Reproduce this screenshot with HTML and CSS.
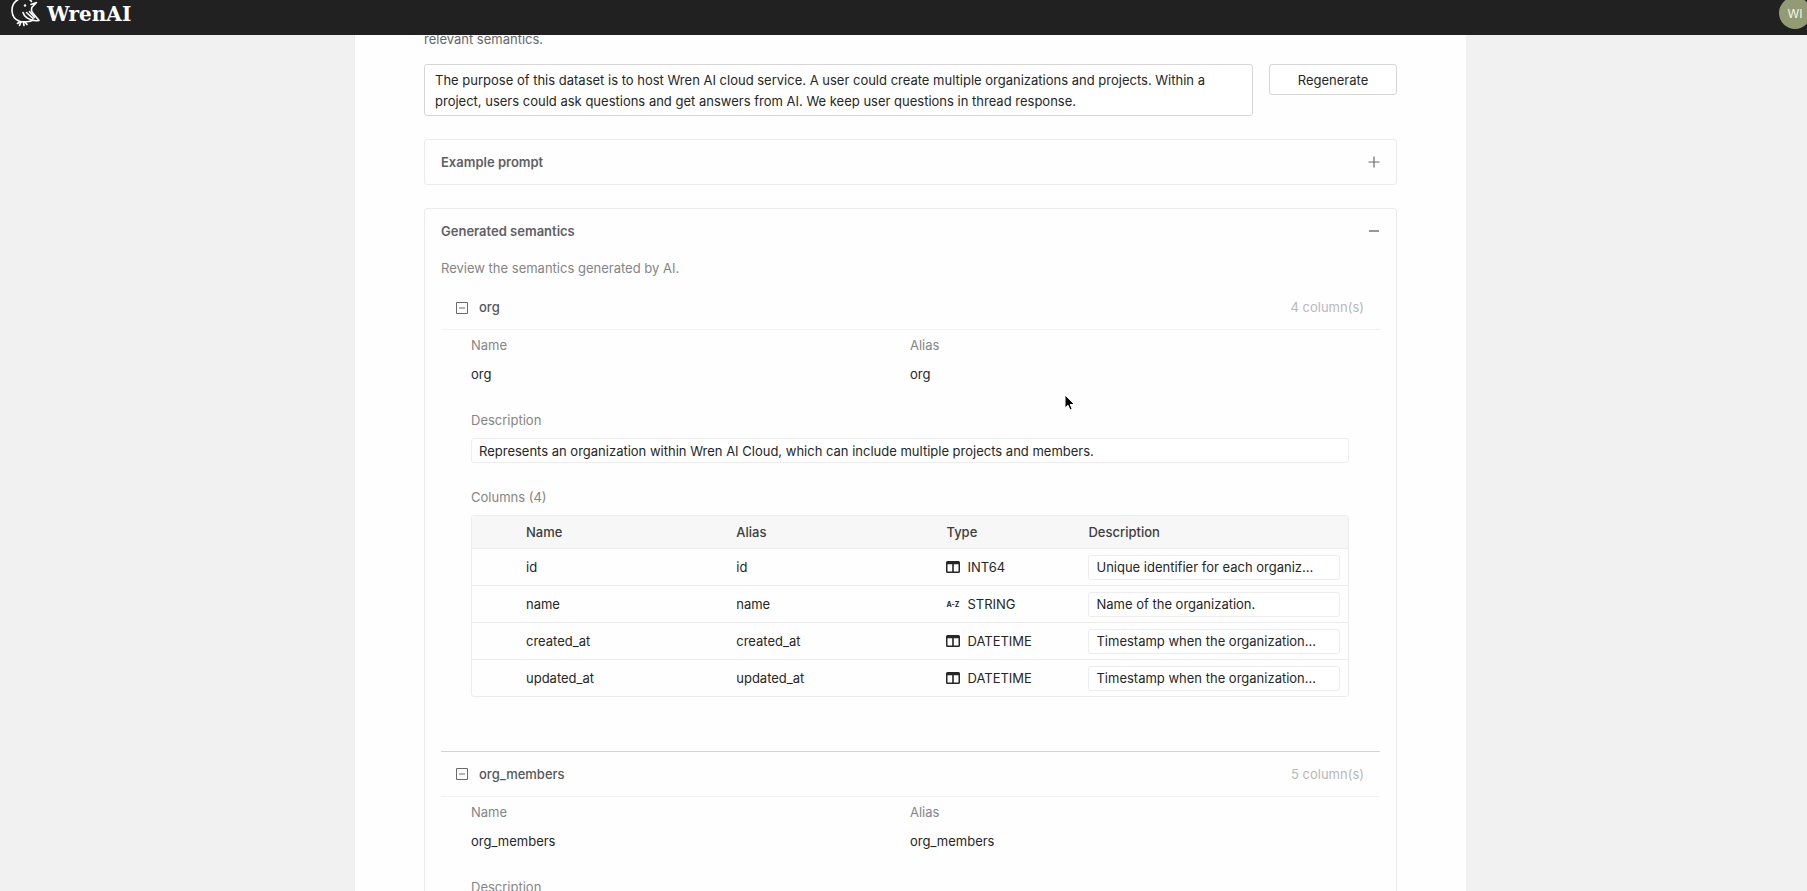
FILE: index.html
```html
<!DOCTYPE html>
<html lang="en">
<head>
<meta charset="utf-8">
<title>WrenAI</title>
<link rel="stylesheet" href="styles.css">
</head>
<body>
<svg class="defs" aria-hidden="true">
  <symbol id="i-cols" viewBox="0 0 14 12"><path fill="currentColor" fill-rule="evenodd" d="M1.500 0h11A1.500 1.500 0 0 1 14 1.500v9a1.500 1.500 0 0 1-1.500 1.500h-11A1.500 1.500 0 0 1 0 10.500v-9A1.500 1.500 0 0 1 1.500 0zM1.500 3.200v7.300h4.700V3.200zM7.800 3.200v7.300h4.700V3.200z"/></symbol>
  <symbol id="i-minus-square" viewBox="0 0 12 12"><path fill="none" stroke="currentColor" d="M.5 .5h11v11H.5zM3 6h6"/></symbol>
</svg>
<header class="header">
  <a class="brand" href="#">
    <svg class="bird" viewBox="0 0 30 28" fill="none" stroke="#fff" stroke-width="1.600" stroke-linecap="round" stroke-linejoin="round" aria-hidden="true">
      <path d="M8 0C3 2.500 .8 7 1 12c.3 5 3 8.500 7 10l2 .700h6c2.500 0 4.500-.4 6-1.500"/>
      <path d="M8 0c4-1.500 10-1.500 12.500 2.500"/>
      <path d="M20 5.500 25.500 3.500 20.800 8.500c-.5 1.500-.4 3 .2 4.500L28 21.500c-3.500.5-8.500-.2-12-2.700-2.200-1.600-3.500-3.300-4-5.300"/>
      <path d="M15.500 13.500l6.500 6M18.500 12.500l5 6"/>
      <path d="M10 23l-1.500 3.500M8.500 23 6.500 24.500M14 23l2 2.500M12.500 23.500l.5 3"/>
      <circle cx="14" cy="6.500" r="1.200" fill="#fff" stroke="none"/>
    </svg>
    <span class="brand-name">WrenAI</span>
  </a>
  <button class="avatar" type="button">WI</button>
</header>
<main class="main">
  <div class="sheet">
    <p class="intro">relevant semantics.</p>
    <div class="prompt">
      <textarea class="prompt-text" rows="2" aria-label="Prompt">The purpose of this dataset is to host Wren AI cloud service. A user could create multiple organizations and projects. Within a project, users could ask questions and get answers from AI. We keep user questions in thread response.</textarea>
      <button class="regen" type="button">Regenerate</button>
    </div>
    <section class="card example">
      <button class="card-head" type="button">Example prompt
        <svg class="icon" viewBox="0 0 12 12" aria-hidden="true"><path fill="none" stroke="currentColor" stroke-width="1.200" d="M6 .5v11M.5 6h11"/></svg>
      </button>
    </section>
    <section class="card semantics">
      <button class="card-head" type="button">Generated semantics
        <svg class="icon" viewBox="0 0 12 12" aria-hidden="true"><path fill="none" stroke="currentColor" stroke-width="1.400" d="M1 6h10"/></svg>
      </button>
      <p class="hint">Review the semantics generated by AI.</p>

      <article class="model">
        <button class="model-head" type="button">
          <svg class="icon" aria-hidden="true"><use href="#i-minus-square"/></svg>
          <span class="model-name">org</span><span class="count">4 column(s)</span>
        </button>
        <div class="model-body">
          <dl class="pair">
            <div><dt>Name</dt><dd>org</dd></div>
            <div><dt>Alias</dt><dd>org</dd></div>
          </dl>
          <label class="label" for="org-desc">Description</label>
          <input class="field" id="org-desc" type="text" value="Represents an organization within Wren AI Cloud, which can include multiple projects and members.">
          <h3 class="label">Columns (4)</h3>
          <table class="columns">
            <colgroup><col class="c-pad"><col class="c-name"><col class="c-name"><col class="c-type"><col></colgroup>
            <thead><tr><th></th><th>Name</th><th>Alias</th><th>Type</th><th>Description</th></tr></thead>
            <tbody>
              <tr><td></td><td>id</td><td>id</td><td><span class="type"><svg class="type-icon" aria-hidden="true"><use href="#i-cols"/></svg>INT64</span></td><td><input class="field" type="text" aria-label="id description" value="Unique identifier for each organiz..."></td></tr>
              <tr><td></td><td>name</td><td>name</td><td><span class="type"><span class="az">A-Z</span>STRING</span></td><td><input class="field" type="text" aria-label="name description" value="Name of the organization."></td></tr>
              <tr><td></td><td>created_at</td><td>created_at</td><td><span class="type"><svg class="type-icon" aria-hidden="true"><use href="#i-cols"/></svg>DATETIME</span></td><td><input class="field" type="text" aria-label="created_at description" value="Timestamp when the organization..."></td></tr>
              <tr><td></td><td>updated_at</td><td>updated_at</td><td><span class="type"><svg class="type-icon" aria-hidden="true"><use href="#i-cols"/></svg>DATETIME</span></td><td><input class="field" type="text" aria-label="updated_at description" value="Timestamp when the organization..."></td></tr>
            </tbody>
          </table>
        </div>
      </article>

      <article class="model">
        <button class="model-head" type="button">
          <svg class="icon" aria-hidden="true"><use href="#i-minus-square"/></svg>
          <span class="model-name">org_members</span><span class="count">5 column(s)</span>
        </button>
        <div class="model-body">
          <dl class="pair">
            <div><dt>Name</dt><dd>org_members</dd></div>
            <div><dt>Alias</dt><dd>org_members</dd></div>
          </dl>
          <p class="label">Description</p>
        </div>
      </article>
    </section>
  </div>
</main>
<svg class="pointer" viewBox="0 0 12 18" aria-hidden="true"><path d="M1 1v13l3-2.800L6 16l2.200-1-2-4.500H10.500z" fill="#000" stroke="#fff" stroke-width="1"/></svg>
</body>
</html>
```
FILE: styles.css
```css
* { box-sizing: border-box; }
body {
  margin: 0;
  height: 100vh;
  display: flex;
  flex-direction: column;
  overflow: hidden;
  background: #f1f1f1;
  color: #262626;
  font: 13px/21px Inter, "Liberation Sans", sans-serif;
}
p, dl, dd, h3 { margin: 0; }
button, input, textarea { font: inherit; color: inherit; }
button { background: none; border: 0; padding: 0; cursor: pointer; }
.defs { position: absolute; width: 0; height: 0; }
.icon { width: 12px; height: 12px; flex: none; color: #6b6b6b; }

.header {
  flex: none;
  height: 35px;
  padding: 0 0 9px 11px;
  display: flex;
  align-items: center;
  justify-content: space-between;
  overflow: hidden;
  background: #212121;
}
.brand { display: flex; align-items: center; gap: 6px; color: #fff; text-decoration: none; }
.bird { width: 30px; height: 28px; }
.brand-name { margin-top: 2px; font: bold 20px/28px "DejaVu Serif", serif; }
.avatar {
  flex: none;
  width: 32px;
  height: 32px;
  margin-right: -4px;
  border-radius: 50%;
  background: #929b74;
  color: #f4f4ee;
  font-size: 12px;
}

.main { flex: 1; min-height: 0; overflow: hidden; padding-left: 13px; }
.sheet {
  max-width: 1112px;
  min-height: 100%;
  margin: 0 auto;
  padding: 0 69px;
  background: #fefefe;
  border-left: 1px solid #ececec;
}
.intro { margin-top: -6px; color: #65676c; }
.prompt { margin-top: 14px; display: flex; align-items: flex-start; gap: 16px; }
.prompt-text {
  flex: 1;
  height: 52px;
  padding: 5px 10px 4px;
  border: 1px solid #d6d6d6;
  border-radius: 3px;
  background: #fff;
  resize: none;
  overflow: hidden;
}
.regen {
  width: 128px;
  height: 31px;
  padding-top: 1px;
  border: 1px solid #d6d6d6;
  border-radius: 3px;
  background: #fff;
}

.card { border: 1px solid #ebebeb; border-radius: 3px; padding: 0 16px; }
.card-head {
  width: 100%;
  height: 44px;
  display: flex;
  align-items: center;
  justify-content: space-between;
  color: #5f6166;
  font-weight: 600;
}
.example { margin-top: 23px; }
.semantics { margin-top: 23px; }
.hint { margin-top: 4px; line-height: 22px; color: #858585; }

.model + .model { border-top: 1px solid #d4d4d4; }
.model-head {
  width: 100%;
  height: 45px;
  padding: 0 16px 0 15px;
  display: flex;
  align-items: center;
  border-bottom: 1px solid #f1f1f1;
}
.hint + .model .model-head { height: 44px; margin-top: 7px; }
.model-name { margin-left: 11px; font-weight: 500; color: #55575c; }
.count { margin-left: auto; color: #b8b8b8; }
.model-body { padding: 5px 31px 54px 30px; }
.pair { display: grid; grid-template-columns: 1fr 1fr; margin-bottom: 25px; }
.pair dt, .label { display: block; color: #858585; font-weight: 400; font-size: 13px; line-height: 21px; }
.pair dd { margin-top: 8px; }
.field {
  display: block;
  width: 100%;
  height: 25px;
  padding: 0 7px;
  border: 1px solid #ededed;
  border-radius: 3px;
  background: #fff;
  text-overflow: ellipsis;
}
.label + .field { margin: 7px 0 24px; }

.columns {
  width: 100%;
  margin-top: 7px;
  table-layout: fixed;
  border-collapse: separate;
  border-spacing: 0;
  border: 1px solid #ececec;
  border-radius: 3px;
}
.c-pad { width: 46px; }
.c-name { width: 24%; }
.c-type { width: 142px; }
.columns th { height: 32px; padding: 0 8px; background: #f7f7f7; text-align: left; font-weight: 500; color: #3d3d3d; }
.columns td { height: 37px; padding: 0 8px; border-top: 1px solid #ececec; }
.type { display: flex; align-items: center; gap: 7px; }
.type-icon { width: 14px; height: 12px; }
.az { width: 14px; font-size: 7px; font-weight: 700; }

.pointer { position: absolute; left: 1064px; top: 394px; width: 12px; height: 18px; }
```
